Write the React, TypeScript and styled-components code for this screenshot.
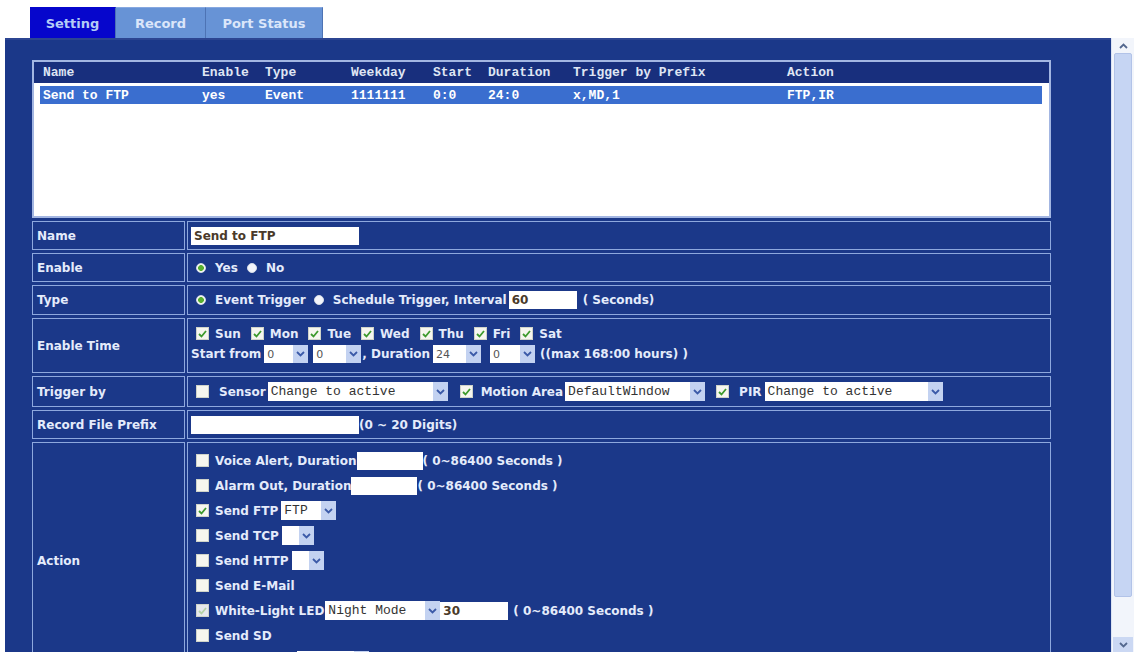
import React from 'react';
import styled, { createGlobalStyle } from 'styled-components';

const GlobalStyle = createGlobalStyle`
  html, body { margin: 0; padding: 0; background: #ffffff; }
  body { font-family: "DejaVu Sans", Verdana, sans-serif; }
  #root { width: 1134px; height: 656px; }
`;

const NAVY = '#1b3889';
const LINE = '#8ea8de';
const TXT = '#e4ebfb';
const UI_FONT = '"DejaVu Sans", Verdana, Tahoma, sans-serif';
const MONO = '"Liberation Mono", "Courier New", monospace';

const Page = styled.div`
  width: 1134px;
  height: 656px;
  overflow: hidden;
  background: #fff;
  display: flex;
  flex-direction: column;
`;

const TabBar = styled.div`
  display: flex;
  padding: 7px 0 0 30px;
  height: 38px;
  box-sizing: border-box;
`;

const Tab = styled.div<{ $active?: boolean; $w: number }>`
  width: ${p => p.$w}px;
  height: 31px;
  box-sizing: border-box;
  display: flex;
  align-items: center;
  justify-content: center;
  font: bold 13px ${UI_FONT};
  background: ${p => (p.$active ? '#0606cc' : '#6793d6')};
  color: ${p => (p.$active ? '#b4ccf6' : '#dbe6fa')};
  border-right: 1px solid #4d73b4;
  border-top: 1px solid ${p => (p.$active ? '#0606cc' : '#86a8e0')};
`;

const Frame = styled.div`
  display: flex;
  height: 614px;
  margin-left: 5px;
`;

const Panel = styled.div`
  flex: 1;
  background: ${NAVY};
  border-top: 2px solid #2c4592;
  padding: 20px 0 0 27px;
  overflow: hidden;
  box-sizing: border-box;
`;

const Form = styled.div`
  width: 1019px;
  display: grid;
  grid-template-columns: 153px 1fr;
  gap: 3px 2px;
`;

const ListBox = styled.div`
  grid-column: 1 / -1;
  height: 158px;
  box-sizing: border-box;
  border: 2px solid #a3b6e2;
  background: #ffffff;
  display: flex;
  flex-direction: column;
`;

const listCols = '159px 63px 86px 82px 55px 85px 214px 1fr';

const ListHeader = styled.div`
  display: grid;
  grid-template-columns: ${listCols};
  height: 21px;
  align-items: center;
  padding-left: 9px;
  background: #182f7d;
  color: #dfe5f3;
  font: bold 13px ${MONO};
`;

const ListRow = styled.div<{ $selected?: boolean }>`
  display: grid;
  grid-template-columns: ${listCols};
  height: 18px;
  align-items: center;
  margin: 3px 7px 0 6px;
  padding-left: 3px;
  background: ${p => (p.$selected ? '#3a6ecf' : 'transparent')};
  color: ${p => (p.$selected ? '#ffffff' : '#000')};
  font: bold 13px ${MONO};
  white-space: nowrap;
`;

const LabelCell = styled.div<{ $h: number }>`
  height: ${p => p.$h}px;
  box-sizing: border-box;
  border: 1px solid ${LINE};
  padding: 0 4px;
  display: flex;
  align-items: center;
  color: ${TXT};
  font: bold 12px ${UI_FONT};
  white-space: nowrap;
`;

const ValueCell = styled.div<{ $h: number; $stack?: boolean }>`
  height: ${p => p.$h}px;
  box-sizing: border-box;
  border: 1px solid ${LINE};
  padding: ${p => (p.$stack ? '5px 3px 0 3px' : '0 3px')};
  display: flex;
  flex-direction: ${p => (p.$stack ? 'column' : 'row')};
  align-items: ${p => (p.$stack ? 'stretch' : 'center')};
  color: ${TXT};
  font: bold 12px ${UI_FONT};
  white-space: nowrap;
  overflow: hidden;
`;

const Line = styled.div<{ $h?: number }>`
  height: ${p => p.$h ?? 25}px;
  flex: 0 0 auto;
  display: flex;
  align-items: center;
`;

const Text = styled.span<{ $ml?: number; $mr?: number }>`
  margin-left: ${p => p.$ml ?? 0}px;
  margin-right: ${p => p.$mr ?? 0}px;
`;

const Spacer = styled.span<{ $w: number }>`
  width: ${p => p.$w}px;
  flex: 0 0 auto;
`;

const TextBox = styled.input<{ $w: number; $ml?: number }>`
  width: ${p => p.$w}px;
  height: 18px;
  box-sizing: border-box;
  margin: 0 0 0 ${p => p.$ml ?? 0}px;
  padding: 1px 3px;
  border: none;
  background: #ffffff;
  color: #4a3a2a;
  font: bold 12px ${UI_FONT};
  outline: none;
`;

const SelectBox = styled.div<{ $w: number; $ml?: number; $h?: number }>`
  width: ${p => p.$w}px;
  height: ${p => p.$h ?? 19}px;
  margin-left: ${p => p.$ml ?? 0}px;
  display: inline-flex;
  flex: 0 0 auto;
  background: #ffffff;
  box-sizing: border-box;
`;

const SelectValue = styled.span<{ $mono?: boolean }>`
  flex: 1;
  display: flex;
  align-items: center;
  padding-left: 3px;
  overflow: hidden;
  color: ${p => (p.$mono ? '#333' : '#555')};
  font: ${p => (p.$mono ? `normal 13px ${MONO}` : `normal 11px ${UI_FONT}`)};
`;

const SelectArrow = styled.span`
  width: 15px;
  background: #c3d2f1;
  display: flex;
  align-items: center;
  justify-content: center;
`;

const Box = styled.span<{ $ml?: number; $mr?: number; $dim?: boolean }>`
  width: 13px;
  height: 13px;
  box-sizing: border-box;
  flex: 0 0 auto;
  margin-left: ${p => p.$ml ?? 0}px;
  margin-right: ${p => p.$mr ?? 0}px;
  background: ${p => (p.$dim ? '#e6e8ec' : '#f6f6ef')};
  border: 1px solid #cfd3c9;
  display: flex;
  align-items: center;
  justify-content: center;
`;

const Dot = styled.span<{ $on?: boolean; $ml?: number }>`
  width: 10px;
  height: 10px;
  border-radius: 50%;
  flex: 0 0 auto;
  margin-left: ${p => p.$ml ?? 0}px;
  margin-right: 9px;
  background: ${p =>
    p.$on ? 'radial-gradient(circle, #58b030 0 2.6px, #f6f8f2 3.2px)' : '#f3f5fb'};
  border: 1px solid #d6dde8;
  box-sizing: border-box;
`;

const Scrollbar = styled.div`
  width: 23px;
  display: flex;
  flex-direction: column;
  background: #f2f5fb;
  border-left: 1px solid #dbe3f3;
  box-sizing: border-box;
`;

const ScrollBtn = styled.div<{ $fill?: boolean }>`
  height: 15px;
  display: flex;
  align-items: center;
  justify-content: center;
  background: ${p => (p.$fill ? '#cbd8f3' : 'transparent')};
  margin: 0 1px;
`;

const Thumb = styled.div`
  height: 542px;
  margin: 0 2px;
  background: #c6d5f3;
  border: 1px solid #b2c3e8;
  border-radius: 2px;
`;

const TrackRest = styled.div`
  flex: 1;
`;

const Chevron: React.FC<{ up?: boolean; color?: string }> = ({ up, color = '#3b5aa8' }) => (
  <svg width="9" height="6" viewBox="0 0 9 6">
    <path
      d={up ? 'M1 5 L4.5 1.5 L8 5' : 'M1 1 L4.5 4.5 L8 1'}
      fill="none"
      stroke={color}
      strokeWidth="1.8"
    />
  </svg>
);

const Check: React.FC<{ dim?: boolean }> = ({ dim }) => (
  <svg width="9" height="8" viewBox="0 0 9 8">
    <path d="M1 4 L3.5 6.5 L8 1" fill="none" stroke={dim ? '#b5d2a5' : '#3d9a2d'} strokeWidth="1.8" />
  </svg>
);

const CheckBox: React.FC<{ on?: boolean; dim?: boolean; ml?: number; mr?: number }> = ({
  on,
  dim,
  ml = 8,
  mr = 6,
}) => (
  <Box $ml={ml} $mr={mr} $dim={dim}>
    {on && <Check dim={dim} />}
  </Box>
);

const Select: React.FC<{ w: number; value?: string; mono?: boolean; ml?: number; h?: number }> = ({
  w,
  value = '',
  mono,
  ml,
  h,
}) => (
  <SelectBox $w={w} $ml={ml} $h={h}>
    <SelectValue $mono={mono}>{value}</SelectValue>
    <SelectArrow>
      <Chevron />
    </SelectArrow>
  </SelectBox>
);

const listHead = ['Name', 'Enable', 'Type', 'Weekday', 'Start', 'Duration', 'Trigger by Prefix', 'Action'];
const listData = ['Send to FTP', 'yes', 'Event', '1111111', '0:0', '24:0', 'x,MD,1', 'FTP,IR'];
const days = ['Sun', 'Mon', 'Tue', 'Wed', 'Thu', 'Fri', 'Sat'];

export default function App() {
  return (
    <Page>
      <GlobalStyle />
      <TabBar>
        <Tab $active $w={86}>Setting</Tab>
        <Tab $w={90}>Record</Tab>
        <Tab $w={117}>Port Status</Tab>
      </TabBar>
      <Frame>
        <Panel>
          <Form>
            <ListBox>
              <ListHeader>
                {listHead.map(h => (
                  <span key={h}>{h}</span>
                ))}
              </ListHeader>
              <ListRow $selected>
                {listData.map((d, i) => (
                  <span key={i}>{d}</span>
                ))}
              </ListRow>
            </ListBox>

            <LabelCell $h={29}>Name</LabelCell>
            <ValueCell $h={29}>
              <TextBox $w={168} readOnly defaultValue="Send to FTP" />
            </ValueCell>

            <LabelCell $h={29}>Enable</LabelCell>
            <ValueCell $h={29}>
              <Dot $on $ml={5} />
              <Text $mr={9}>Yes</Text>
              <Dot $on={false} />
              <Text>No</Text>
            </ValueCell>

            <LabelCell $h={30}>Type</LabelCell>
            <ValueCell $h={30}>
              <Dot $on $ml={5} />
              <Text $mr={8}>Event Trigger</Text>
              <Dot />
              <Text $mr={2}>Schedule Trigger, Interval</Text>
              <TextBox $w={68} readOnly defaultValue="60" />
              <Text $ml={6}>( Seconds)</Text>
            </ValueCell>

            <LabelCell $h={55}>Enable Time</LabelCell>
            <ValueCell $h={55} $stack>
              <Line $h={19}>
                {days.map(d => (
                  <React.Fragment key={d}>
                    <CheckBox on ml={d === 'Sun' ? 5 : 0} mr={6} />
                    <Text $mr={10}>{d}</Text>
                  </React.Fragment>
                ))}
              </Line>
              <Line $h={22}>
                <Text $mr={3}>Start from</Text>
                <Select w={44} value="0" h={18} />
                <Select w={48} value="0" h={18} ml={5} />
                <Text $ml={1} $mr={3}>, Duration</Text>
                <Select w={48} value="24" h={18} />
                <Select w={45} value="0" h={18} ml={9} />
                <Text $ml={5}>((max 168:00 hours) )</Text>
              </Line>
            </ValueCell>

            <LabelCell $h={31}>Trigger by</LabelCell>
            <ValueCell $h={31}>
              <CheckBox ml={5} mr={10} />
              <Text $mr={2}>Sensor</Text>
              <Select w={180} value="Change to active" mono />
              <CheckBox on ml={12} mr={8} />
              <Text $mr={2}>Motion Area</Text>
              <Select w={140} value="DefaultWindow" mono />
              <CheckBox on ml={11} mr={10} />
              <Text $mr={3}>PIR</Text>
              <Select w={178} value="Change to active" mono />
            </ValueCell>

            <LabelCell $h={29}>Record File Prefix</LabelCell>
            <ValueCell $h={29}>
              <TextBox $w={168} readOnly defaultValue="" />
              <Text>(0 ~ 20 Digits)</Text>
            </ValueCell>

            <LabelCell $h={237}>Action</LabelCell>
            <ValueCell $h={237} $stack>
              <Line>
                <CheckBox ml={5} />
                <Text>Voice Alert, Duration</Text>
                <TextBox $w={66} readOnly defaultValue="" />
                <Text>( 0~86400 Seconds )</Text>
              </Line>
              <Line>
                <CheckBox ml={5} />
                <Text>Alarm Out, Duration</Text>
                <TextBox $w={66} readOnly defaultValue="" />
                <Text>( 0~86400 Seconds )</Text>
              </Line>
              <Line>
                <CheckBox on ml={5} />
                <Text $mr={3}>Send FTP</Text>
                <Select w={55} value="FTP" mono />
              </Line>
              <Line>
                <CheckBox ml={5} />
                <Text $mr={3}>Send TCP</Text>
                <Select w={32} />
              </Line>
              <Line>
                <CheckBox ml={5} />
                <Text $mr={3}>Send HTTP</Text>
                <Select w={32} />
              </Line>
              <Line>
                <CheckBox ml={5} />
                <Text>Send E-Mail</Text>
              </Line>
              <Line>
                <CheckBox on dim ml={5} />
                <Text $mr={1}>White-Light LED</Text>
                <Select w={115} value="Night Mode" mono />
                <TextBox $w={68} readOnly defaultValue="30" />
                <Text $ml={5}>( 0~86400 Seconds )</Text>
              </Line>
              <Line>
                <CheckBox ml={5} />
                <Text>Send SD</Text>
              </Line>
              <Line>
                <Spacer $w={106} />
                <Select w={72} />
              </Line>
            </ValueCell>
          </Form>
        </Panel>
        <Scrollbar>
          <ScrollBtn>
            <Chevron up color="#54688f" />
          </ScrollBtn>
          <Thumb />
          <TrackRest />
          <ScrollBtn $fill>
            <Chevron color="#54688f" />
          </ScrollBtn>
        </Scrollbar>
      </Frame>
    </Page>
  );
}
